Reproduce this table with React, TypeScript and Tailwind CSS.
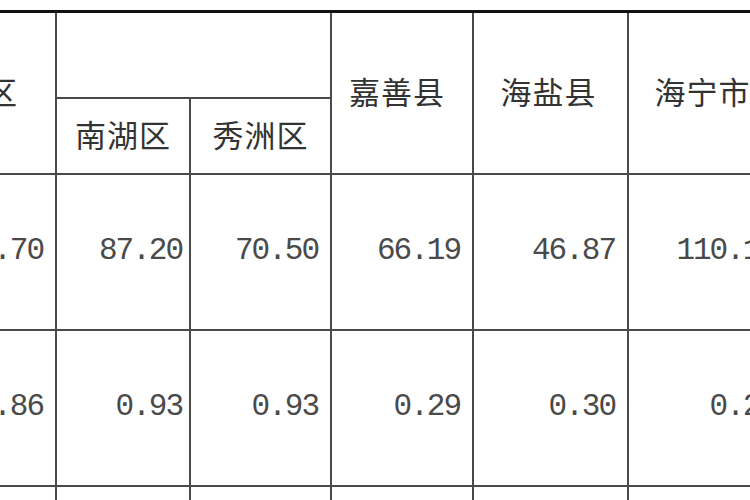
import React from "react";

const rows = [
    { total: "157.70", nanhu: "87.20", xiuzhou: "70.50", jiashan: "66.19", haiyan: "46.87", haining: "110.15" },
    { total: "1.86", nanhu: "0.93", xiuzhou: "0.93", jiashan: "0.29", haiyan: "0.30", haining: "0.25" },
    { total: "", nanhu: "", xiuzhou: "", jiashan: "", haiyan: "", haining: "" },
];

const cjk = "font-['Noto_Sans_CJK_SC',sans-serif] text-[31px] tracking-[1px] text-[#333] font-normal leading-none pb-[4px]";
const num = "font-['Liberation_Mono',monospace] text-[31px] tracking-[-2px] text-[#4a4a4a] text-right align-middle";
const line = "border-2 border-[#4a4a4a]";

const App = () => {
    return (
        <div className="w-[750px] h-[500px] overflow-hidden bg-white">
            <table className="mt-[10px] -ml-[85px] border-collapse table-fixed w-[873px]">
                <colgroup>
                    <col className="w-[140px]" />
                    <col className="w-[134px]" />
                    <col className="w-[141px]" />
                    <col className="w-[142px]" />
                    <col className="w-[155px]" />
                    <col className="w-[161px]" />
                </colgroup>
                <thead>
                    <tr className="h-[86px]">
                        <th rowSpan={2} className={`${line} border-t-[3px] border-t-[#111] ${cjk} text-center align-middle`}>市区</th>
                        <th colSpan={2} className={`${line} border-t-[3px] border-t-[#111]`}></th>
                        <th rowSpan={2} className={`${line} border-t-[3px] border-t-[#111] ${cjk} text-center align-middle pr-[10px]`}>嘉善县</th>
                        <th rowSpan={2} className={`${line} border-t-[3px] border-t-[#111] ${cjk} text-center align-middle pr-[4px]`}>海盐县</th>
                        <th rowSpan={2} className={`${line} border-t-[3px] border-t-[#111] ${cjk} text-center align-middle pr-[12px]`}>海宁市</th>
                    </tr>
                    <tr className="h-[76px]">
                        <th className={`${line} ${cjk} text-center align-middle`}>南湖区</th>
                        <th className={`${line} ${cjk} text-center align-middle`}>秀洲区</th>
                    </tr>
                </thead>
                <tbody>
                    {rows.map((r, i) => (
                        <tr key={i} className="h-[156px]">
                            <td className={`${line} ${num} pr-3`}>{r.total}</td>
                            <td className={`${line} ${num} pr-[7px]`}>{r.nanhu}</td>
                            <td className={`${line} ${num} pr-3`}>{r.xiuzhou}</td>
                            <td className={`${line} ${num} pr-3`}>{r.jiashan}</td>
                            <td className={`${line} ${num} pr-3`}>{r.haiyan}</td>
                            <td className={`${line} ${num} pr-3`}>{r.haining}</td>
                        </tr>
                    ))}
                </tbody>
            </table>
        </div>
    );
};

export default App;
